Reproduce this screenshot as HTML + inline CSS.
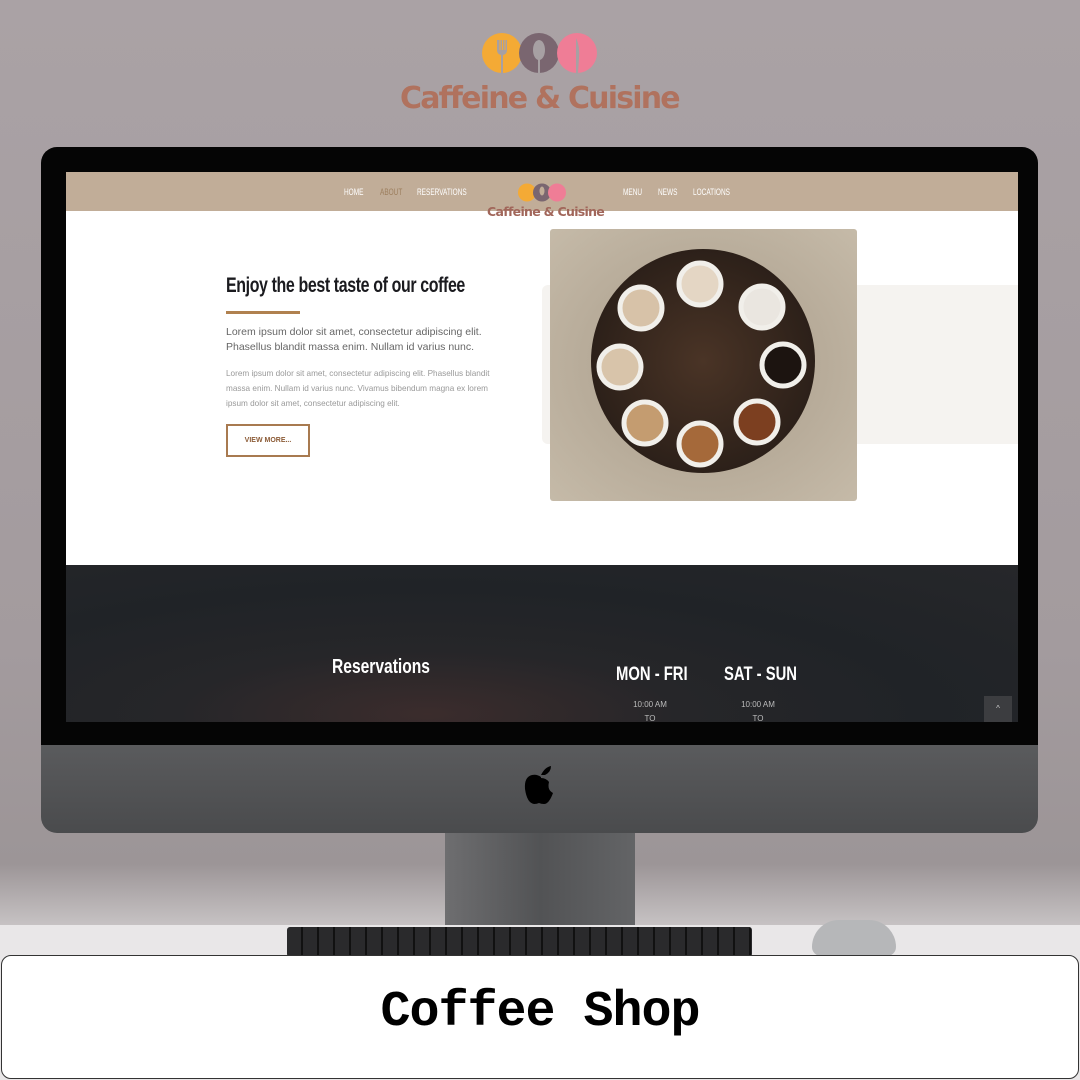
<!DOCTYPE html>
<html><head><meta charset="utf-8"><style>
*{margin:0;padding:0;box-sizing:border-box}
body{width:1080px;height:1080px;overflow:hidden;position:relative;font-family:"Liberation Sans",sans-serif;background:linear-gradient(#aaa2a5 0%,#a39b9e 60%,#9c9597 80%,#c9c5c6 86%,#e8e6e7 88%)}
.abs{position:absolute}
.nav{position:absolute;top:15px;font-size:9px;color:#fff;white-space:nowrap;transform:scaleX(.72);transform-origin:left}
</style></head><body>
<svg class="abs" style="left:480px;top:32px" width="120" height="44" viewBox="0 0 120 44">
<circle cx="22" cy="21" r="20" fill="#f4aa35"/><circle cx="59" cy="21" r="20" fill="#7a6670"/><circle cx="97" cy="21" r="20" fill="#ef7d96"/>
<path d="M17 8v10q0 4 4 5v19h2v-19q4-1 4-5V8h-1.5v10h-1V8h-1.5v10h-1V8h-1.5v10h-1V8z" fill="#a7a0a3"/>
<ellipse cx="59" cy="18" rx="6" ry="10" fill="#a7a0a3"/><rect x="58" y="26" width="2" height="16" fill="#a7a0a3"/>
<path d="M96 6q4 8 3 20l-1 16h-2z" fill="#a7a0a3"/>
</svg>
<div class="abs" style="left:400px;top:81px;font:bold 30px 'DejaVu Sans',sans-serif;color:#b0725e;letter-spacing:-1.8px;white-space:nowrap">Caffeine &amp; Cuisine</div>
<div class="abs" style="left:41px;top:147px;width:997px;height:600px;background:#050505;border-radius:16px 16px 0 0"></div>
<div class="abs" style="left:41px;top:745px;width:997px;height:88px;background:linear-gradient(#5a5b5d,#4a4b4d);border-radius:0 0 16px 16px"></div>
<svg class="abs" style="left:524px;top:765px" width="34" height="40" viewBox="0 0 34 40"><path d="M17 10q4-8 10-9q0 6-6 9zM17 12q-4-3-9-2q-8 2-7 14q2 14 9 15q3 0 5-1q2 1 5 1q5 0 9-11q-6-3-4-11q-3-4-8-4z" fill="#000"/></svg>
<div class="abs" style="left:445px;top:833px;width:190px;height:92px;background:linear-gradient(90deg,#6e6e70,#525355 50%,#636466)"></div>
<div class="abs" style="left:0;top:925px;width:1080px;height:40px;background:#e9e7e8"></div>
<div class="abs" style="left:287px;top:927px;width:465px;height:30px;background:repeating-linear-gradient(90deg,#2a2a2c 0 14px,#111 14px 16px);border-radius:3px"></div>
<div class="abs" style="left:812px;top:920px;width:84px;height:36px;background:#b6b7b9;border-radius:30px 30px 10px 10px"></div>
<div class="abs" style="left:66px;top:172px;width:952px;height:550px;background:#fff;overflow:hidden">
 <div class="abs" style="left:0;top:0;width:952px;height:39px;background:#c1ad98"></div>
 <div class="nav" style="left:278px">HOME</div>
 <div class="nav" style="left:314px;color:#9d7f5e">ABOUT</div>
 <div class="nav" style="left:351px">RESERVATIONS</div>
 <div class="nav" style="left:557px">MENU</div>
 <div class="nav" style="left:592px">NEWS</div>
 <div class="nav" style="left:627px">LOCATIONS</div>
 <svg class="abs" style="left:452px;top:11px" width="48" height="19" viewBox="0 0 48 19"><circle cx="9" cy="9.5" r="9" fill="#f4aa35"/><circle cx="24" cy="9.5" r="9" fill="#7a6670"/><circle cx="39" cy="9.5" r="9" fill="#ef7d96"/><ellipse cx="24" cy="8" rx="2.5" ry="4.5" fill="#c1ad98"/></svg>
 <div class="abs" style="left:421px;top:32px;font:bold 12.5px 'DejaVu Sans',sans-serif;color:#a1665a;letter-spacing:-.7px;white-space:nowrap">Caffeine &amp; Cuisine</div>
 <div class="abs" style="left:476px;top:113px;width:476px;height:159px;background:#f5f3f0;border-radius:6px 0 0 6px"></div>
 <div class="abs" style="left:160px;top:102px;font:bold 21px 'Liberation Sans Narrow','Liberation Sans',sans-serif;color:#1b1b1f;white-space:nowrap;transform:scaleX(.76);transform-origin:left;letter-spacing:-.5px">Enjoy the best taste of our coffee</div>
 <div class="abs" style="left:160px;top:139px;width:74px;height:3px;background:#b0814f"></div>
 <div class="abs" style="left:160px;top:153px;font-size:10.5px;line-height:15px;color:#666;width:320px">Lorem ipsum dolor sit amet, consectetur adipiscing elit.<br>Phasellus blandit massa enim. Nullam id varius nunc.</div>
 <div class="abs" style="left:160px;top:194px;font-size:8.2px;line-height:15px;color:#999;width:320px">Lorem ipsum dolor sit amet, consectetur adipiscing elit. Phasellus blandit<br>massa enim. Nullam id varius nunc. Vivamus bibendum magna ex lorem<br>ipsum dolor sit amet, consectetur adipiscing elit.</div>
 <div class="abs" style="left:160px;top:252px;width:84px;height:33px;border:2px solid #a87a50;font:bold 7px 'Liberation Sans';color:#8b5a35;text-align:center;line-height:29px">VIEW MORE...</div>
 <svg class="abs" style="left:484px;top:57px" width="307" height="272" viewBox="0 0 307 272">
  <defs><radialGradient id="bg" cx=".5" cy=".5" r=".7"><stop offset="0" stop-color="#a79a88"/><stop offset="1" stop-color="#c5baa8"/></radialGradient>
  <radialGradient id="tb"><stop offset="0" stop-color="#4a3426"/><stop offset="1" stop-color="#2c2019"/></radialGradient></defs>
  <rect width="307" height="272" rx="3" fill="url(#bg)"/>
  <circle cx="153" cy="132" r="112" fill="url(#tb)"/>
  <g stroke="#f1efea" stroke-width="5">
  <circle cx="91" cy="79" r="21" fill="#d7c2a8"/><circle cx="150" cy="55" r="21" fill="#e4d6c4"/><circle cx="212" cy="78" r="21" fill="#eae6e0"/>
  <circle cx="70" cy="138" r="21" fill="#d8c4aa"/><circle cx="233" cy="136" r="21" fill="#1c1410"/>
  <circle cx="95" cy="194" r="21" fill="#c49c70"/><circle cx="150" cy="215" r="21" fill="#a5693a"/><circle cx="207" cy="193" r="21" fill="#7c3f20"/>
  </g></svg>
 <div class="abs" style="left:0;top:393px;width:952px;height:157px;background:radial-gradient(ellipse at 38% 95%,#3b2c2c 0,#262629 30%,#202327 60%,#26272a)"></div>
 <div class="abs" style="left:266px;top:484px;font:bold 20px 'Liberation Sans Narrow','Liberation Sans',sans-serif;color:#fff;transform:scaleX(.78);transform-origin:left">Reservations</div>
 <div class="abs" style="left:550px;top:492px;font:bold 19px 'Liberation Sans Narrow','Liberation Sans',sans-serif;color:#fff;white-space:nowrap;transform:scaleX(.78);transform-origin:left">MON - FRI</div>
 <div class="abs" style="left:658px;top:492px;font:bold 19px 'Liberation Sans Narrow','Liberation Sans',sans-serif;color:#fff;white-space:nowrap;transform:scaleX(.78);transform-origin:left">SAT - SUN</div>
 <div class="abs" style="left:567px;top:526px;font-size:8px;color:#bbb;text-align:center;width:34px;line-height:14px">10:00 AM<br>TO</div>
 <div class="abs" style="left:675px;top:526px;font-size:8px;color:#bbb;text-align:center;width:34px;line-height:14px">10:00 AM<br>TO</div>
 <div class="abs" style="left:918px;top:524px;width:28px;height:26px;background:#3c3d40;color:#ccc;font-size:8px;text-align:center;line-height:26px">^</div>
</div>
<div class="abs" style="left:1px;top:955px;width:1078px;height:124px;background:#fff;border:1px solid #333;border-radius:10px"></div>
<div class="abs" style="left:0;top:984px;width:1080px;text-align:center;font:bold 50px 'Liberation Mono',monospace;color:#000;letter-spacing:-1px">Coffee Shop</div>
</body></html>
